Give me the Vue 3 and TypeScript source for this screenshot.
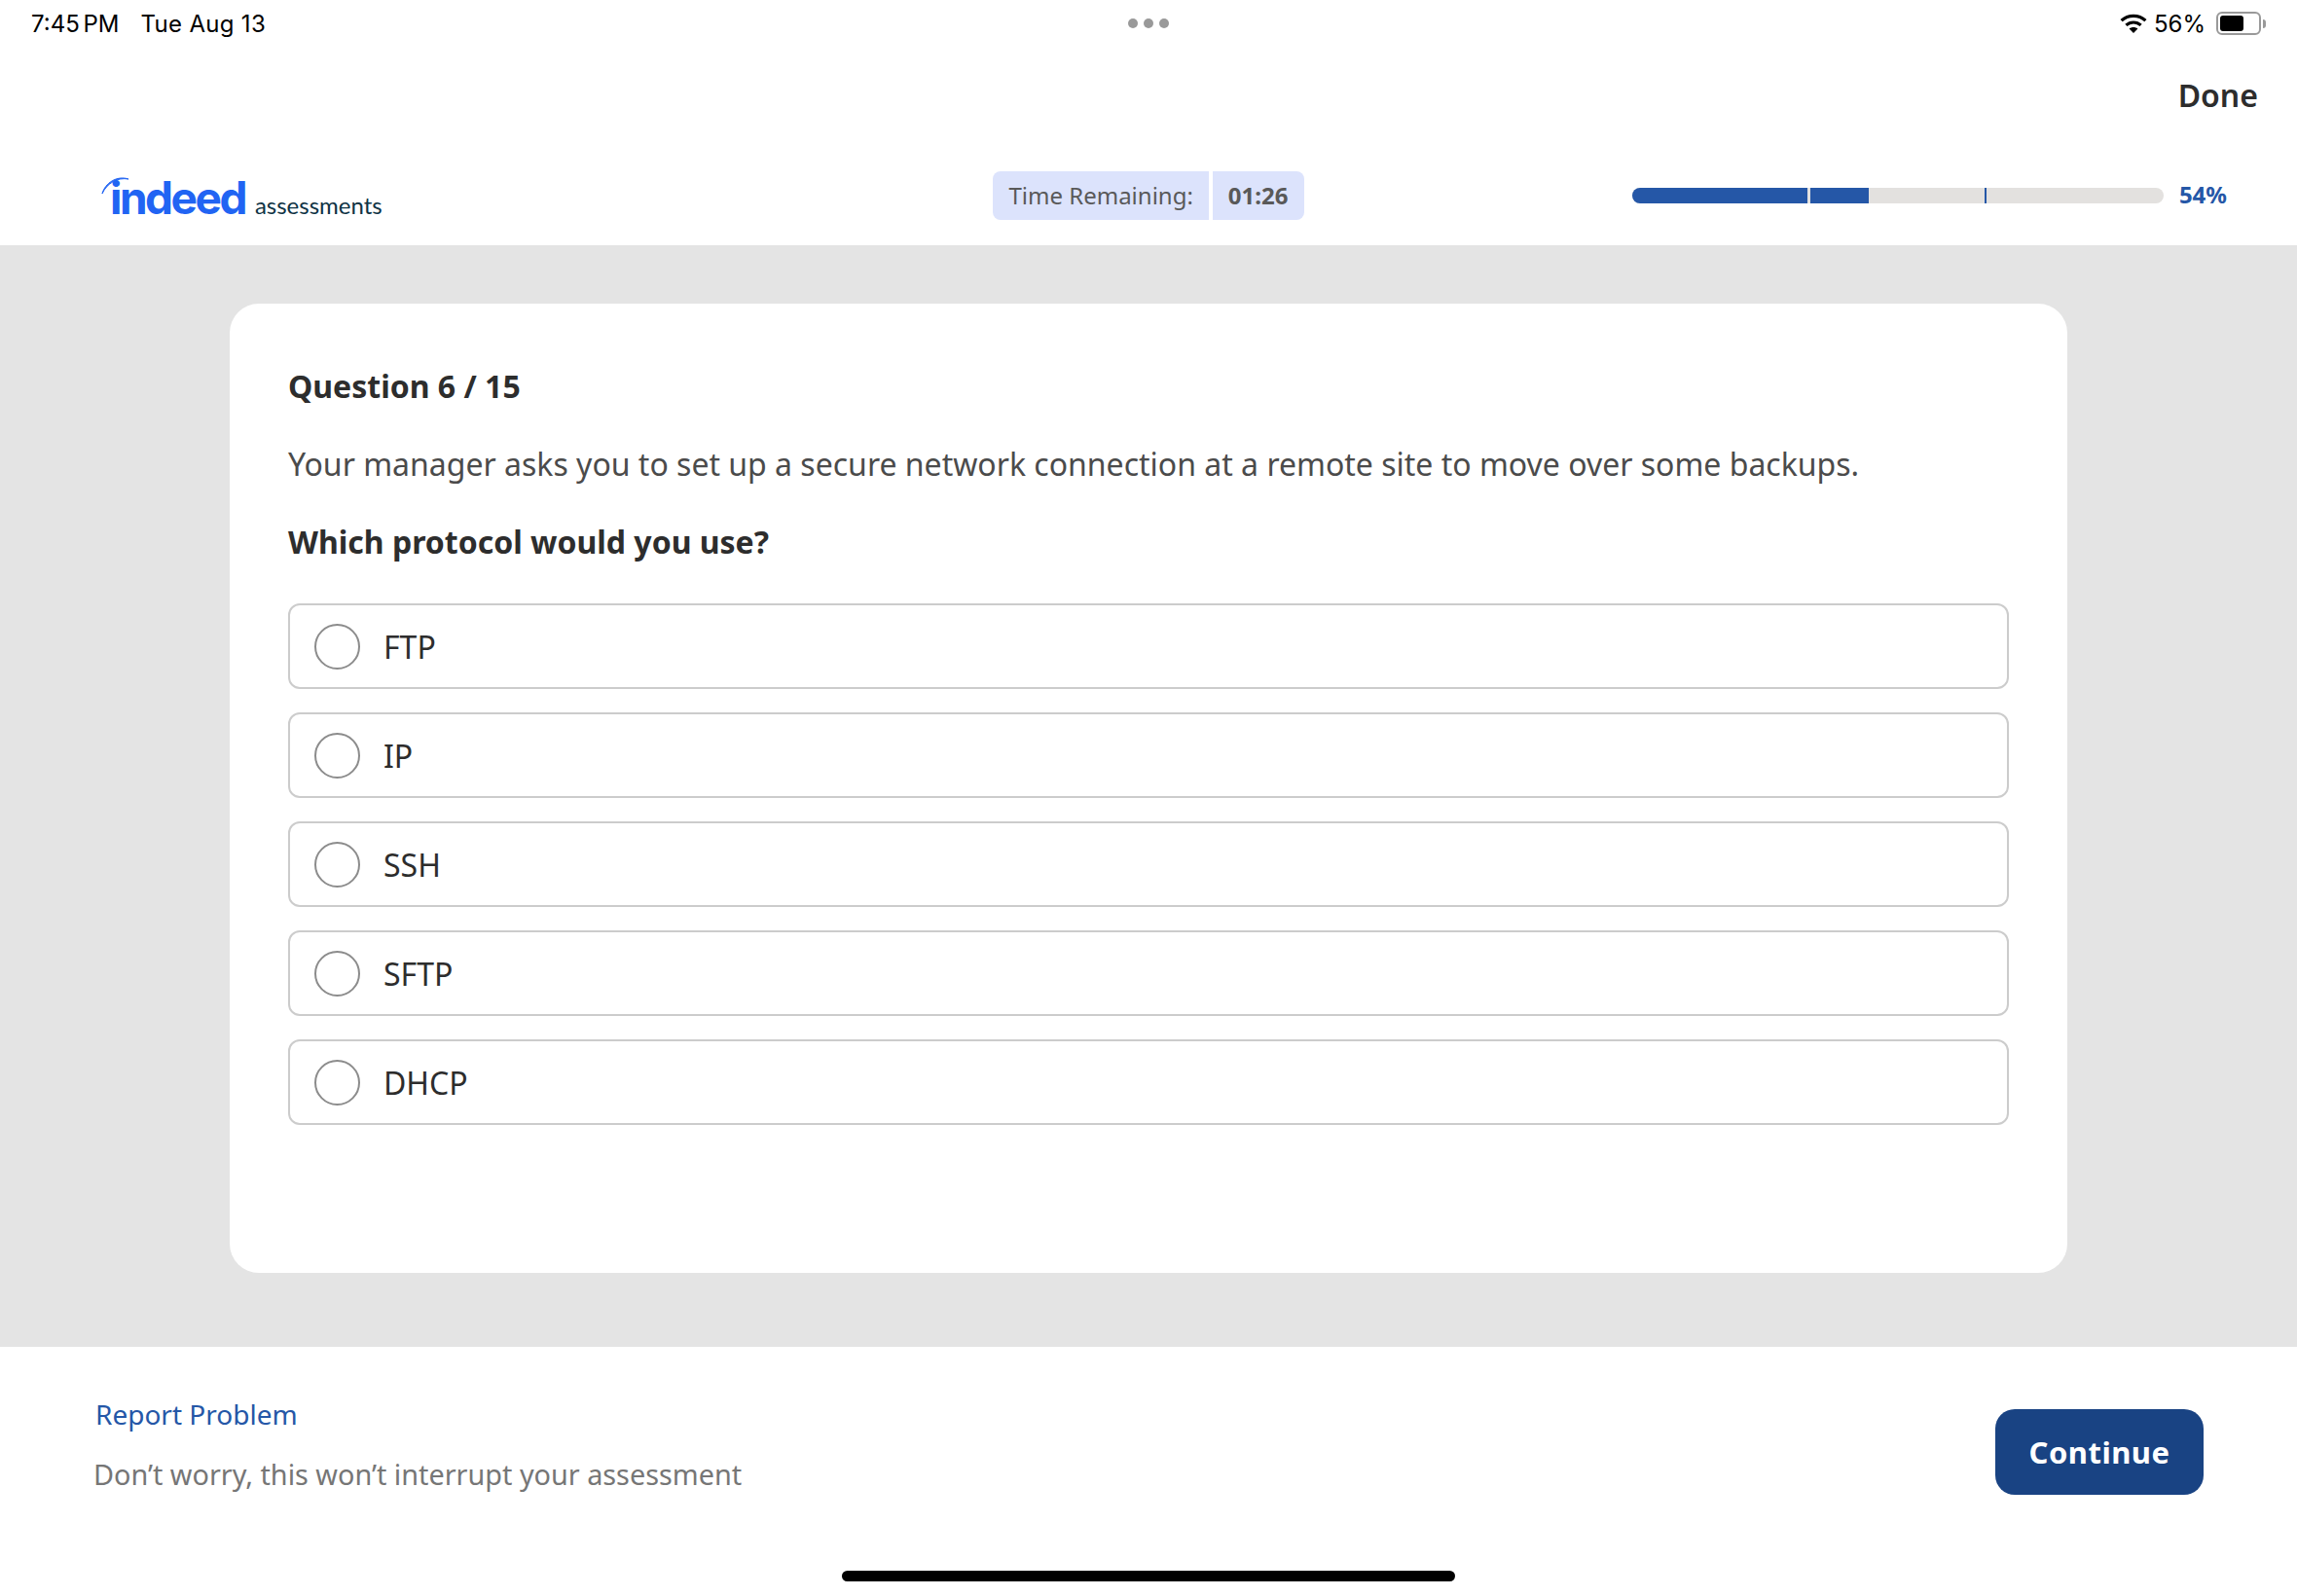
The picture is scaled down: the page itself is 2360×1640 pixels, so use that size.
<script setup lang="ts">
import { ref } from 'vue'

const options = ['FTP', 'IP', 'SSH', 'SFTP', 'DHCP']
const selected = ref('')
const percent = 54
</script>

<template>
  <div class="page">
    <header class="top">
      <div class="status">
        <div class="status-left">
          <span class="clock">7:45 PM</span>
          <span class="date">Tue Aug 13</span>
        </div>
        <div class="dots"><i></i><i></i><i></i></div>
        <div class="status-right">
          <svg class="wifi" viewBox="0 0 28 20" width="28" height="20">
            <path d="M1.6 7.2C8.6.7 19.4.7 26.4 7.2" fill="none" stroke="#000" stroke-width="3.2" />
            <path d="M6.4 11.9c4.3-3.9 10.9-3.9 15.2 0" fill="none" stroke="#000" stroke-width="3.2" />
            <path d="M14 20l-4.4-4.6c2.5-2 6.3-2 8.8 0z" fill="#000" />
          </svg>
          <span class="batt-pct">56%</span>
          <span class="battery"><span class="battery-fill"></span></span>
          <span class="battery-nub"></span>
        </div>
      </div>

      <div class="done-row"><span class="done">Done</span></div>

      <div class="brand-row">
        <div class="logo">
          <svg class="logo-arc" viewBox="0 0 30 22" width="30" height="22">
            <path d="M1 20C4 9 16 1 28 5C17 3 6 9 1 20z" fill="#2164f3" stroke="#2164f3" stroke-width="1" />
          </svg>
          <span class="logo-word">indeed</span>
          <span class="logo-sub">assessments</span>
        </div>

        <div class="timer">
          <span class="timer-label">Time Remaining:</span>
          <span class="timer-value">01:26</span>
        </div>

        <div class="progress">
          <div class="track">
            <div class="seg seg-a"></div>
            <div class="seg seg-b"></div>
            <div class="marker"></div>
          </div>
          <span class="pct">{{ percent }}%</span>
        </div>
      </div>
    </header>

    <main class="main">
      <section class="card">
        <h2 class="count">Question 6 / 15</h2>
        <p class="body">Your manager asks you to set up a secure network connection at a remote site to move over some backups.</p>
        <h3 class="ask">Which protocol would you use?</h3>
        <div class="options">
          <label v-for="opt in options" :key="opt" class="option" @click="selected = opt">
            <span class="radio"></span>
            <span class="opt-text">{{ opt }}</span>
          </label>
        </div>
      </section>
    </main>

    <footer class="footer">
      <div class="report">
        <a class="report-link">Report Problem</a>
        <p class="report-note">Don’t worry, this won’t interrupt your assessment</p>
      </div>
      <button class="continue">Continue</button>
      <div class="home-bar"></div>
    </footer>
  </div>
</template>

<style>
html, body { margin: 0; background: #fff; }
</style>

<style scoped>
.page { position: relative; width: 2360px; height: 1640px; display: flex; flex-direction: column; font-family: "Noto Sans", sans-serif; color: #2d2d2d; overflow: hidden; }

.top { height: 252px; flex: none; background: #fff; }
.status { height: 48px; display: grid; grid-template-columns: 1fr auto 1fr; align-items: center; padding: 0 32px; font-family: Inter, sans-serif; font-size: 24px; color: #000; }
.status-left { display: flex; gap: 22px; }
.clock { word-spacing: -3px; }
.date { letter-spacing: 0.3px; }
.dots { display: flex; gap: 6px; }
.dots i { width: 10px; height: 10px; border-radius: 50%; background: #999; }
.status-right { display: flex; align-items: center; justify-content: flex-end; }
.wifi { margin-right: 7px; }
.batt-pct { margin-right: 11px; }
.battery { width: 46px; height: 24px; box-sizing: border-box; border: 2px solid #999; border-radius: 6px; padding: 2px; display: flex; }
.battery-fill { width: 24px; background: #000; border-radius: 3px; }
.battery-nub { width: 3px; height: 9px; margin-left: 2px; background: #999; border-radius: 0 3px 3px 0; }

.done-row { height: 102px; display: flex; justify-content: flex-end; align-items: center; padding: 0 40px 3px 0; box-sizing: border-box; }
.done { font-size: 32px; font-weight: 600; color: #2d2d2d; }

.brand-row { height: 102px; display: grid; grid-template-columns: 1fr auto 1fr; align-items: center; padding: 0 72px; }
.logo { position: relative; display: flex; align-items: baseline; margin-left: 32px; padding-left: 9px; height: 50px; }
.logo-arc { position: absolute; left: 0; top: 3px; }
.logo-word { font-family: Inter, sans-serif; font-size: 46px; font-weight: 700; line-height: 54px; letter-spacing: -2.5px; color: #2164f3; }
.logo-sub { margin-left: 10px; font-family: Lato, sans-serif; font-size: 24px; color: #0f3345; }

.timer { display: flex; gap: 4px; height: 50px; font-size: 24px; color: #595959; }
.timer-label, .timer-value { display: flex; align-items: center; padding-bottom: 2px; box-sizing: border-box; background: #dce3fc; }
.timer-label { padding-left: 16px; padding-right: 16px; border-radius: 8px 0 0 8px; }
.timer-value { padding-left: 16px; padding-right: 16px; border-radius: 0 8px 8px 0; font-weight: 700; }

.progress { justify-self: end; display: flex; align-items: center; gap: 16px; }
.track { position: relative; width: 546px; height: 16px; background: #e3e1df; border-radius: 8px; overflow: hidden; display: flex; }
.seg { height: 100%; background: #2557a7; }
.seg-a { width: 180px; margin-right: 3px; }
.seg-b { width: 60px; }
.marker { position: absolute; left: 362px; top: 0; width: 2px; height: 100%; background: #2557a7; }
.pct { padding-bottom: 3px; font-size: 24px; font-weight: 700; color: #2557a7; }

.main { height: 1132px; flex: none; box-sizing: border-box; padding: 60px 236px 76px; background: #e4e4e4; }
.card { height: 996px; box-sizing: border-box; padding: 62px 60px; background: #fff; border-radius: 30px; }
.count { margin: 0; font-size: 32px; line-height: 46px; font-weight: 700; color: #2d2d2d; }
.body { margin: 34px 0 0; font-size: 32px; line-height: 46px; color: #4b4b4b; white-space: nowrap; }
.ask { margin: 34px 0 0; font-size: 32px; line-height: 46px; font-weight: 700; color: #2d2d2d; }
.options { display: flex; flex-direction: column; gap: 24px; margin-top: 40px; }
.option { height: 88px; box-sizing: border-box; display: flex; align-items: center; padding-left: 25px; border: 2px solid #ccc; border-radius: 12px; }
.radio { width: 47px; height: 47px; box-sizing: border-box; border: 2px solid #8c8c8c; border-radius: 50%; }
.opt-text { margin-left: 24px; font-size: 32px; color: #2d2d2d; }

.footer { position: relative; flex: 1; display: flex; justify-content: space-between; align-items: flex-start; padding: 64px 96px 0; background: #fff; }
.report { margin-top: -17px; }
.report-link { display: block; margin-left: 2px; font-size: 28px; line-height: 44px; color: #2557a7; }
.report-note { margin: 18px 0 0; font-size: 28.800px; line-height: 44px; color: #767676; }
.continue { width: 214px; height: 88px; border: 0; border-radius: 20px; background: #194383; color: #fff; font-family: "Noto Sans", sans-serif; font-size: 31px; font-weight: 700; letter-spacing: 0.5px; padding: 0; }
.home-bar { position: absolute; left: 865px; top: 230px; width: 630px; height: 11px; background: #000; border-radius: 6px; }
</style>
